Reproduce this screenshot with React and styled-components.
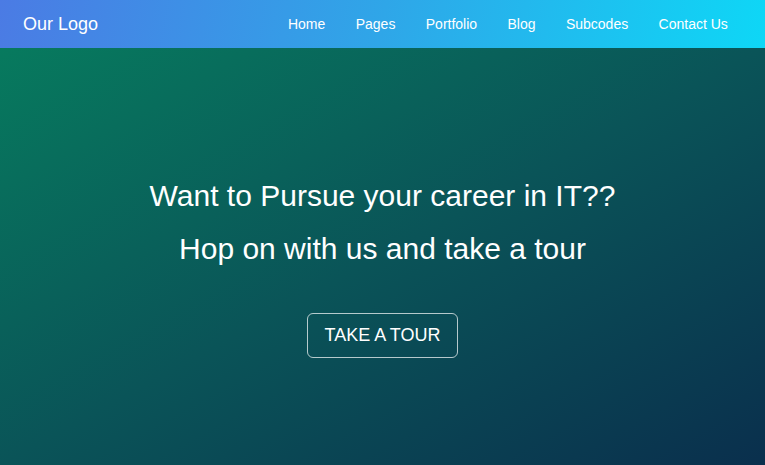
import React from "react"
import styled, { createGlobalStyle } from "styled-components"

const GlobalStyle = createGlobalStyle`
  html, body {
    margin: 0;
    padding: 0;
    height: 100%;
  }
  body {
    font-family: "Liberation Sans", Arial, sans-serif;
    color: #fff;
  }
  #root {
    height: 100%;
  }
`

const Page = styled.div`
  display: flex;
  flex-direction: column;
  height: 100vh;
`

const Navbar = styled.nav`
  display: flex;
  align-items: center;
  justify-content: space-between;
  height: 48px;
  padding: 0 22px 0 23px;
  background: linear-gradient(100deg, #4b7be4 0%, #2fa6e8 50%, #0ed7f6 100%);
  flex-shrink: 0;
`

const Logo = styled.a`
  font-size: 18px;
  color: #fff;
  text-decoration: none;
`

const Links = styled.ul`
  display: flex;
  list-style: none;
  margin: 0;
  padding: 0;
`

const LinkItem = styled.li`
  padding: 0 15.2px;

  a {
    color: #fff;
    text-decoration: none;
    font-size: 14px;
  }
`

const Hero = styled.section`
  flex: 1;
  display: flex;
  flex-direction: column;
  align-items: center;
  justify-content: center;
  padding-top: 23px;
  background: linear-gradient(to bottom right, #077a5e 0%, #0a5458 50%, #0a2f4d 100%);
`

const Heading = styled.h1`
  margin: 0;
  font-size: 30px;
  font-weight: normal;
  line-height: 36px;
  text-align: center;
  color: #fff;

  & + & {
    margin-top: 17px;
  }
`

const TourButton = styled.button`
  margin-top: 46px;
  padding: 11px 16px;
  font-family: inherit;
  font-size: 18px;
  line-height: 21px;
  color: #fff;
  background: transparent;
  border: 1px solid rgba(255, 255, 255, 0.7);
  border-radius: 6px;
  cursor: pointer;
`

const links = ["Home", "Pages", "Portfolio", "Blog", "Subcodes", "Contact Us"]

const App = () => (
  <Page>
    <GlobalStyle />
    <Navbar>
      <Logo href="#">Our Logo</Logo>
      <Links>
        {links.map((l) => (
          <LinkItem key={l}>
            <a href="#">{l}</a>
          </LinkItem>
        ))}
      </Links>
    </Navbar>
    <Hero>
      <Heading>Want to Pursue your career in IT??</Heading>
      <Heading>Hop on with us and take a tour</Heading>
      <TourButton>TAKE A TOUR</TourButton>
    </Hero>
  </Page>
)

export default App
